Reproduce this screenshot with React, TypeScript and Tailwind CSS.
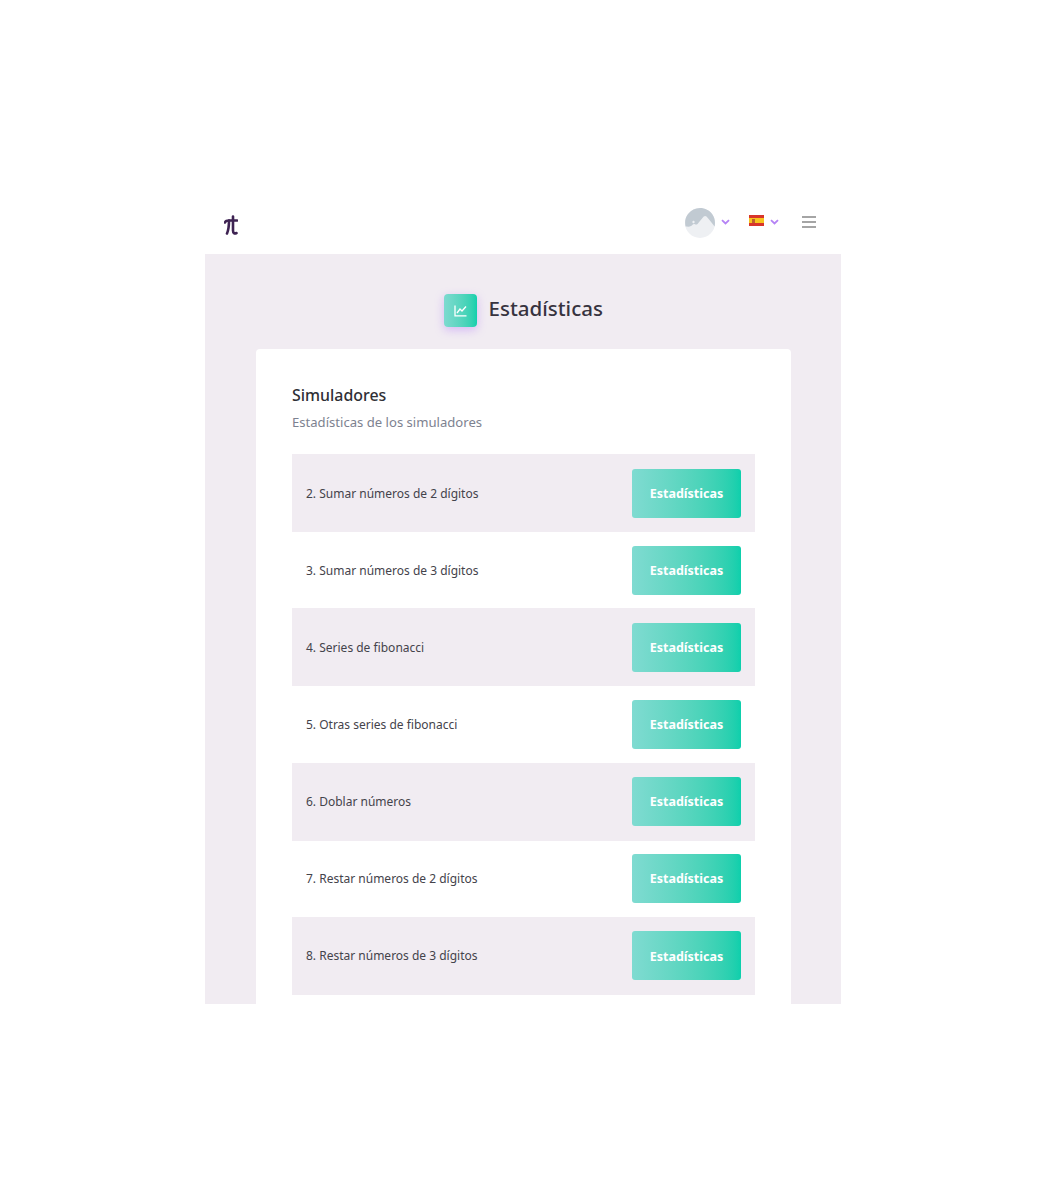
const simuladores = [
  "2. Sumar números de 2 dígitos",
  "3. Sumar números de 3 dígitos",
  "4. Series de fibonacci",
  "5. Otras series de fibonacci",
  "6. Doblar números",
  "7. Restar números de 2 dígitos",
  "8. Restar números de 3 dígitos",
]

function Logo() {
  return (
    <svg width="14" height="20" viewBox="0 0 14 20" fill="none" stroke="#3e2352" strokeWidth="2.600" strokeLinecap="round">
      <path d="M1 7.500C1.500 5.500 3 5.500 5 5.500H13" />
      <path d="M5 5.500C5 11 4.500 15 3 18.500" />
      <path d="M9 1.500V15.500C9 18 10.500 19 12.500 18" />
    </svg>
  )
}

function Chevron() {
  return (
    <svg width="9" height="6" viewBox="0 0 9 6" fill="none" className="mb-[2px]">
      <path d="M1 1.200L4.500 4.500L8 1.200" stroke="#b583f5" strokeWidth="1.800" />
    </svg>
  )
}

function Avatar() {
  return (
    <svg width="30" height="30" viewBox="0 0 30 30">
      <circle cx="15" cy="15" r="15" fill="#eef0f3" />
      <path
        d="M0.600 18.500C-0.500 14 0.200 9.500 3 6C6 2.200 10.500 0 15 0C20 0 24.500 2.300 27.300 6.200C29.800 9.700 30.500 14 29.600 18.500C27 15.500 24.500 11.500 21.500 8.500C20.500 7.600 19.500 7.800 18.500 8.800L12.500 16C11.500 17 10.500 16.500 9.500 16C8 15.500 7.500 17 6 18C4.500 19 2 18.500 0.600 18.500Z"
        fill="#c1cad2"
      />
      <path d="M8.500 12.500L10 14L8.500 15.500L7 14Z" fill="#eef0f3" />
    </svg>
  )
}

function Flag() {
  return (
    <div className="mb-[5px] flex h-[11px] w-[15px] flex-col">
      <div className="h-[3px] bg-[#d8352b]" />
      <div className="flex h-[5px] items-center bg-[#f7c51e] pl-[3px]">
        <div className="h-[4px] w-[3px] bg-[#c0602c]" />
      </div>
      <div className="h-[3px] bg-[#d8352b]" />
    </div>
  )
}

function ChartIcon() {
  return (
    <svg width="13" height="12" viewBox="0 0 13 12" fill="none" stroke="#ffffff" strokeWidth="1.300">
      <path d="M1 0.500V10.800H12.500" />
      <path d="M3 8L6 4L8 6L12 1.500" />
    </svg>
  )
}

export default function App() {
  return (
    <div className="h-[1198px] bg-white pt-[205px] font-['Noto_Sans',sans-serif]">
      <div className="ml-[205px] w-[635.500px]">
        {/* Top bar */}
        <div className="flex h-[49px] items-start justify-between pl-[19px] pr-[24.500px] pt-[3px]">
          <div className="mt-[7px]">
            <Logo />
          </div>
          <div className="flex h-[30px] items-center">
            <Avatar />
            <div className="ml-[6px]">
              <Chevron />
            </div>
            <div className="ml-[19px]">
              <Flag />
            </div>
            <div className="ml-[6px]">
              <Chevron />
            </div>
            <div className="mb-[2px] ml-[23px] flex w-[14px] flex-col gap-[3px]">
              <div className="h-[2px] bg-[#a5a5a5]" />
              <div className="h-[2px] bg-[#a5a5a5]" />
              <div className="h-[2px] bg-[#a5a5a5]" />
            </div>
          </div>
        </div>

        {/* Main */}
        <div className="h-[750px] overflow-hidden bg-[#f1ecf2] pl-[51px] pr-[50px] pt-[40px]">
          <div className="flex h-[33px] items-center justify-center gap-3">
            <div className="flex h-[33px] w-[33px] items-center justify-center rounded-[4px] bg-gradient-to-r from-[#7ddad0] to-[#0ed0ad] shadow-[0_3px_10px_rgba(170,110,250,0.4)]">
              <ChartIcon />
            </div>
            <h1 className="mb-[5px] text-[20.500px] font-medium leading-[30px] text-[#37333f]">Estadísticas</h1>
          </div>

          <div className="mt-[22px] rounded-[4px] bg-white px-[36px] pb-[35px] pt-[36px]">
            <h2 className="text-[15.900px] font-medium leading-[20px] text-[#2f2f35]">Simuladores</h2>
            <p className="mt-[7px] text-[13.100px] leading-[20px] text-[#7d8290]">Estadísticas de los simuladores</p>

            <div className="mt-[22px]">
              {simuladores.map((name, i) => (
                <div
                  key={name}
                  className={`flex items-center justify-between pl-[14px] pr-[13.500px] ${i % 2 === 0 ? "h-[78px] bg-[#f1ecf2]" : "h-[76.330px] bg-white"}`}
                >
                  <span className="pt-[1px] text-[12px] text-[#44434b]">{name}</span>
                  <button className="h-[49px] w-[109px] rounded-[3px] bg-gradient-to-r from-[#7fdbd1] to-[#0ccfac] pt-[2px] text-[12.500px] font-bold text-white">
                    Estadísticas
                  </button>
                </div>
              ))}
            </div>
          </div>
        </div>
      </div>
    </div>
  )
}
